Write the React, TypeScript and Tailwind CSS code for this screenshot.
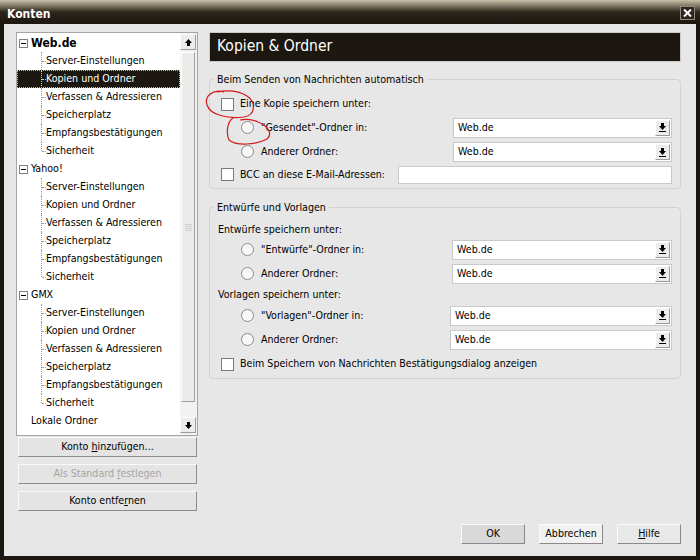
import React from "react";

const font = "font-['DejaVu_Sans_Condensed','DejaVu_Sans',sans-serif]";

const kids = [
  "Server-Einstellungen",
  "Kopien und Ordner",
  "Verfassen & Adressieren",
  "Speicherplatz",
  "Empfangsbestätigungen",
  "Sicherheit",
];

const accounts = [
  { name: "Web.de", bold: true },
  { name: "Yahoo!", bold: false },
  { name: "GMX", bold: false },
];

function Expander() {
  return (
    <span className="w-[9px] h-[9px] border border-[#808080] bg-white flex items-center justify-center">
      <span className="w-[5px] h-px bg-black" />
    </span>
  );
}

function ArrowUp() {
  return (
    <svg width="7" height="7" viewBox="0 0 7 7">
      <path d="M3.5 0 L7 4 L5 4 L5 7 L2 7 L2 4 L0 4 Z" fill="#000" />
    </svg>
  );
}

function ArrowDown({ bar }: { bar?: boolean }) {
  return (
    <svg width="7" height={bar ? 9 : 7} viewBox={bar ? "0 0 7 9" : "0 0 7 7"}>
      <path d="M3.5 7 L7 3 L5 3 L5 0 L2 0 L2 3 L0 3 Z" fill="#000" />
      {bar && <rect x="0" y="8" width="7" height="1" fill="#000" />}
    </svg>
  );
}

function ChildRow({ text, last, selected }: { text: string; last: boolean; selected?: boolean }) {
  return (
    <div className={`relative h-[18px] flex items-center ${selected ? "bg-[#1c1710] text-white" : ""}`}>
      <span
        className={`absolute left-[24px] top-0 border-l border-dotted ${selected ? "border-[#cfcfcf]" : "border-[#9a9a9a]"} ${last ? "h-[9px]" : "h-[18px]"}`}
      />
      <span className={`absolute left-[25px] top-[9px] w-[4px] border-t border-dotted ${selected ? "border-[#cfcfcf]" : "border-[#9a9a9a]"}`} />
      <span className="pl-[29px]">{text}</span>
      {selected && <span className="absolute inset-0 border border-dotted border-[#bdbdbd] pointer-events-none" />}
    </div>
  );
}

function Tree() {
  return (
    <div className="w-[182px] h-[404px] border border-[#a5a5a5] bg-white flex">
      <div className="flex-1 text-black pt-px">
        {accounts.map((a) => (
          <div key={a.name}>
            <div className="h-[18px] flex items-center pl-[2px] gap-[3px]">
              <Expander />
              <span className={a.bold ? "font-bold text-[12px]" : ""}>{a.name}</span>
            </div>
            {kids.map((k, i) => (
              <ChildRow key={k} text={k} last={i === kids.length - 1} selected={a.name === "Web.de" && i === 1} />
            ))}
          </div>
        ))}
        <div className="h-[18px] flex items-center pl-[14px]">Lokale Ordner</div>
      </div>
      <div className="w-[17px] bg-[#f2f2f0] flex flex-col">
        <div className="h-[16px] mt-px mr-px bg-[#ececea] border border-[#fdfdfd] border-r-[#9c9c9c] border-b-[#9c9c9c] flex items-center justify-center">
          <ArrowUp />
        </div>
        <div className="h-[350px] mt-[2px] mr-[2px] ml-px bg-[#ebebe9] border border-[#fefefe] border-r-[#a0a0a0] border-b-[#a0a0a0] flex items-center justify-center">
          <div className="flex flex-col gap-[1px]">
            <span className="w-[7px] h-px bg-[#d0d0d0]" />
            <span className="w-[7px] h-px bg-[#d0d0d0]" />
            <span className="w-[7px] h-px bg-[#d0d0d0]" />
            <span className="w-[7px] h-px bg-[#d0d0d0]" />
          </div>
        </div>
        <div className="flex-1" />
        <div className="h-[16px] mb-[2px] mr-px bg-[#ececea] border border-[#fdfdfd] border-r-[#9c9c9c] border-b-[#9c9c9c] flex items-center justify-center">
          <ArrowDown />
        </div>
      </div>
    </div>
  );
}

function SideButton({ children, disabled }: { children: React.ReactNode; disabled?: boolean }) {
  return (
    <div
      className={`w-[179px] h-[20px] ml-[2px] flex items-center justify-center bg-[#e4e4e4] border border-[#fafafa] border-r-[#8c8c8c] border-b-[#8c8c8c] ${disabled ? "text-[#a5a5a5]" : "text-black"}`}
    >
      {children}
    </div>
  );
}

function Checkbox() {
  return <span className="w-[13px] h-[13px] border border-[#7a7a7a] bg-white shrink-0" />;
}

function Radio() {
  return <span className="w-[13px] h-[13px] rounded-full border border-[#8a8a8a] bg-[#f7f7f7] shrink-0" />;
}

function Select({ w }: { w: string }) {
  return (
    <div className={`${w} h-[20px] bg-white border border-[#c9c9c9] flex items-center justify-between pl-[4px] pr-px`}>
      <span>Web.de</span>
      <span className="w-[15px] h-[16px] bg-[#ececea] border border-[#fdfdfd] border-r-[#9a9a9a] border-b-[#9a9a9a] flex items-center justify-center">
        <ArrowDown bar />
      </span>
    </div>
  );
}

function RadioRow({ label, w, h, pl }: { label: string; w: string; h: string; pl: string }) {
  return (
    <div className={`${h} flex items-center`}>
      <span className={`${pl} flex items-center gap-[7px]`}>
        <Radio />
        <span>{label}</span>
      </span>
      <span className="ml-auto">
        <Select w={w} />
      </span>
    </div>
  );
}

function DialogButton({ children, bg }: { children: React.ReactNode; bg: string }) {
  return (
    <div
      className={`w-[64px] h-[20px] flex items-center justify-center text-black ${bg} border border-[#fbfbfb] border-r-[#8a8a8a] border-b-[#8a8a8a]`}
    >
      {children}
    </div>
  );
}

export default function App() {
  return (
    <div className={`relative w-[700px] h-[560px] bg-[#1b1610] flex flex-col ${font}`}>
      <div className="h-[24px] bg-[linear-gradient(to_bottom,#c6bfa8_0%,#8c846f_20%,#2c261b_50%,#1b1610_100%)] flex items-center justify-between pl-[7px] pr-[5px]">
        <span className="text-white font-bold text-[12px] mt-[3px]">Konten</span>
        <span className="w-[15px] h-[14px] mt-[2px] bg-[#2c261c] border border-[#8f8a7c] flex items-center justify-center">
          <svg width="9" height="8" viewBox="0 0 9 8">
            <path d="M1 0.5 L8 7.5 M8 0.5 L1 7.5" stroke="#fff" strokeWidth="2" />
          </svg>
        </span>
      </div>
      <div className="flex-1 mx-[4px] mb-[4px] bg-[#e7e7e7] flex flex-col text-[10.6px] text-black">
        <div className="flex pt-[8px] pl-[12px]">
          <div className="flex flex-col">
            <Tree />
            <div className="flex flex-col gap-[7px] mt-px">
              <SideButton>
                <span>
                  Konto <span className="underline">h</span>inzufügen...
                </span>
              </SideButton>
              <SideButton disabled>
                <span>
                  Als Standard <span className="underline">f</span>estlegen
                </span>
              </SideButton>
              <SideButton>
                <span>
                  Konto entfe<span className="underline">r</span>nen
                </span>
              </SideButton>
            </div>
          </div>
          <div className="ml-[11px] w-[472px] flex flex-col">
            <div className="h-[30px] border border-[#cbcbcb] bg-[#1c1710] flex items-center pl-[7px]">
              <span className="text-white text-[15.5px]">Kopien & Ordner</span>
            </div>
            <fieldset className="mt-[10px] border border-[#d3d3cb] rounded-[4px] pl-[11px] pr-[8px] pb-[2px]">
              <legend className="-ml-[7px] px-[3px] leading-[14px]">Beim Senden von Nachrichten automatisch</legend>
              <div className="h-[22px] flex items-center gap-[6px] mt-[7px]">
                <Checkbox />
                <span>Eine Kopie speichern unter:</span>
              </div>
              <RadioRow label={'"Gesendet"-Ordner in:'} w="w-[219px]" h="h-[25px]" pl="pl-[20px]" />
              <RadioRow label="Anderer Ordner:" w="w-[219px]" h="h-[24px]" pl="pl-[20px]" />
              <div className="h-[22px] flex items-center">
                <span className="flex items-center gap-[6px]">
                  <Checkbox />
                  <span>BCC an diese E-Mail-Adressen:</span>
                </span>
                <span className="ml-auto w-[274px] h-[18px] bg-white border border-[#c9c9c9]" />
              </div>
            </fieldset>
            <fieldset className="mt-[11px] border border-[#d3d3cb] rounded-[4px] pl-[7px] pr-[8px] pb-[2px]">
              <legend className="-ml-[3px] px-[3px] leading-[14px]">Entwürfe und Vorlagen</legend>
              <div className="h-[16px] flex items-center pl-px mt-[8px]">Entwürfe speichern unter:</div>
              <RadioRow label={'"Entwürfe"-Ordner in:'} w="w-[220px]" h="h-[23px]" pl="pl-[24px]" />
              <RadioRow label="Anderer Ordner:" w="w-[220px]" h="h-[25px]" pl="pl-[24px]" />
              <div className="h-[18px] flex items-center pl-px">Vorlagen speichern unter:</div>
              <RadioRow label={'"Vorlagen"-Ordner in:'} w="w-[222px]" h="h-[23px]" pl="pl-[24px]" />
              <RadioRow label="Anderer Ordner:" w="w-[222px]" h="h-[25px]" pl="pl-[24px]" />
              <div className="h-[24px] flex items-center gap-[6px] pl-[4px]">
                <Checkbox />
                <span>Beim Speichern von Nachrichten Bestätigungsdialog anzeigen</span>
              </div>
            </fieldset>
          </div>
        </div>
        <div className="mt-auto mb-[12px] flex justify-end gap-[14px] pr-[15px]">
          <DialogButton bg="bg-[#d9d9d9]">OK</DialogButton>
          <DialogButton bg="bg-[#f1f1f1]">Abbrechen</DialogButton>
          <DialogButton bg="bg-[#e8e8e8]">
            <span>
              <span className="underline">H</span>ilfe
            </span>
          </DialogButton>
        </div>
      </div>
      <svg className="absolute left-0 top-0 pointer-events-none" width="700" height="560">
        <path
          d="M224 92 C213 89 204 96 207 105 C210 115 228 119 244 117 C256 115 256 102 247 96 C239 91 228 90 217 92"
          fill="none"
          stroke="#d21a1a"
          strokeWidth="1.2"
        />
        <path
          d="M233 118 C227 122 226 133 229 140 C236 146 256 145 267 139 C273 134 268 126 258 122 C252 119 245 119 240 120"
          fill="none"
          stroke="#d21a1a"
          strokeWidth="1.2"
        />
      </svg>
    </div>
  );
}
